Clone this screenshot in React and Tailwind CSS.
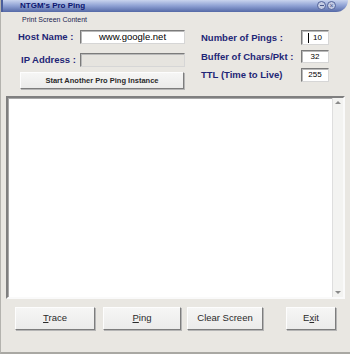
import React from "react";

const label = "text-[#1e2676] font-bold text-[9.5px] leading-none";

function Field({ value, w = "w-[105px]", h = "h-[14px]", grey, children }) {
  return (
    <div
      className={`${w} ${h} flex items-center justify-center border border-t-[#7b7b7b] border-l-[#7b7b7b] border-r-[#d6d6d6] border-b-[#d6d6d6] shadow-[inset_1px_1px_0_#b9b9b9] ${grey ? "bg-[#e6e4df]" : "bg-white"} text-black text-[9.5px] leading-none`}
    >
      {children || value}
    </div>
  );
}

function Btn({ children, className = "", text = "text-[9.5px]" }) {
  return (
    <div
      className={`flex items-center justify-center bg-gradient-to-b from-[#f6f6f5] to-[#ebebea] border border-t-[#fdfdfd] border-l-[#fdfdfd] border-r-[#7d7d7d] border-b-[#7d7d7d] shadow-[1px_1px_0_#b5b5b5] text-[#2a2a2a] ${text} ${className}`}
    >
      {children}
    </div>
  );
}

export default function App() {
  return (
    <div
      className="w-[350px] h-[354px] bg-[#e9e7e2] flex flex-col border-l border-l-[#b4b3ae] border-b-2 border-b-[#a9a8a3] overflow-hidden"
      style={{ fontFamily: '"Liberation Sans", Arial, sans-serif' }}
    >
      {/* title bar */}
      <div className="relative h-[12px] w-[347px] shrink-0 rounded-br-[12px] bg-gradient-to-b from-[#c9d4ee] via-[#8c9fd2] to-[#5569a6] border-l-2 border-l-[#4a5e9c] flex items-center">
        <span className="ml-[17px] text-[8px] font-bold text-[#0c1670] leading-none">
          NTGM's Pro Ping
        </span>
        <div className="absolute right-[12px] top-[1px] flex gap-[1px]">
          <div className="w-[9px] h-[9px] rounded-full bg-[#c3cbe2] border border-[#50619a] flex items-center justify-center">
            <div className="w-[4px] h-[1px] bg-[#4a5a8e]" />
          </div>
          <div className="w-[9px] h-[9px] rounded-full bg-[#c3cbe2] border border-[#50619a] flex items-center justify-center text-[7px] text-[#4a5a8e] leading-none">
            ×
          </div>
        </div>
      </div>

      <div className="h-[13px] pl-[21px] pt-[1px] text-[7px] text-[#1b2450] leading-none flex items-center">
        Print Screen Content
      </div>

      {/* form */}
      <div className="flex h-[71px]">
        <div className="w-[190px] flex flex-col pt-[5px]">
          <div className="flex items-center h-[14px]">
            <span className={`${label} ml-[17px] w-[62px]`}>Host Name :</span>
            <Field value="www.google.net" />
          </div>
          <div className="flex items-center h-[14px] mt-[9px]">
            <span className={`${label} ml-[20px] w-[59px]`}>IP Address :</span>
            <Field grey />
          </div>
          <Btn className="ml-[19px] mt-[5px] w-[164px] h-[17px] font-bold" text="text-[7.5px]">
            Start Another Pro Ping Instance
          </Btn>
        </div>
        <div className="flex flex-col pt-[5px] pl-[10px]">
          <div className="flex items-center h-[15px]">
            <span className={`${label} w-[100px]`}>Number of Pings :</span>
            <Field w="w-[28px]" h="h-[15px]">
              <span className="w-[1px] h-[10px] bg-black mr-[4px]" />
              <span className="text-[8px]">10</span>
            </Field>
          </div>
          <div className="flex items-center h-[13px] mt-[5px]">
            <span className={`${label} w-[100px]`}>Buffer of Chars/Pkt :</span>
            <Field w="w-[28px]" h="h-[13px]">
              <span className="text-[8px]">32</span>
            </Field>
          </div>
          <div className="flex items-center h-[14px] mt-[5px]">
            <span className={`${label} w-[100px]`}>TTL (Time to Live)</span>
            <Field w="w-[28px]" h="h-[14px]">
              <span className="text-[8px]">255</span>
            </Field>
          </div>
        </div>
      </div>

      {/* output area */}
      <div className="ml-[5px] w-[339px] h-[203px] flex border-2 border-t-[#7f7f7f] border-l-[#7f7f7f] border-r-[#fafafa] border-b-[#fafafa] bg-white">
        <div className="flex-1 border-t border-l border-[#a8a8a8]" />
        <div className="w-[11px] bg-[#f3f3f1] border-l border-[#dedede] flex flex-col justify-between items-center py-[3px]">
          <div className="w-0 h-0 border-l-[3px] border-r-[3px] border-b-[3px] border-l-transparent border-r-transparent border-b-[#8a8a8a]" />
          <div className="w-0 h-0 border-l-[3px] border-r-[3px] border-t-[3px] border-l-transparent border-r-transparent border-t-[#8a8a8a]" />
        </div>
      </div>

      {/* buttons */}
      <div className="flex items-start pt-[8px] h-[33px]">
        <Btn className="ml-[14px] w-[80px] h-[23px]">
          <span><span className="underline">T</span>race</span>
        </Btn>
        <Btn className="ml-[8px] w-[78px] h-[23px]">
          <span><span className="underline">P</span>ing</span>
        </Btn>
        <Btn className="ml-[6px] w-[76px] h-[23px]">
          Clear Screen
        </Btn>
        <Btn className="ml-[23px] w-[50px] h-[23px]">
          <span>E<span className="underline">x</span>it</span>
        </Btn>
      </div>
    </div>
  );
}
